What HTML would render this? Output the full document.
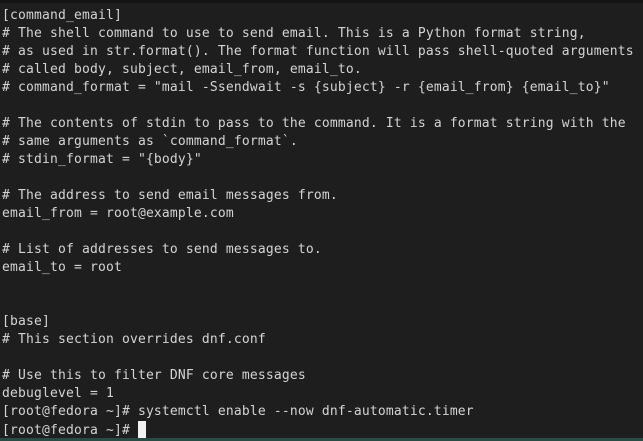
<html><head><style>
body{margin:0;width:643px;height:441px;background:#1e1e1e;overflow:hidden;position:relative}
.top{position:absolute;left:0;top:0;width:643px;height:3px;background:#141414}
.bot{position:absolute;left:0;top:438px;width:643px;height:3px;background:#2a4a44}
pre{position:absolute;left:2px;top:7px;margin:0;font-family:"DejaVu Sans Mono",monospace;font-size:13px;letter-spacing:0.17px;line-height:18px;color:#d4d4d4}
.cur{display:inline-block;width:8px;height:17px;background:#f2f2f2;vertical-align:-4px}
</style></head><body><div class="top"></div><div class="bot"></div><pre>[command_email]
# The shell command to use to send email. This is a Python format string,
# as used in str.format(). The format function will pass shell-quoted arguments
# called body, subject, email_from, email_to.
# command_format = "mail -Ssendwait -s {subject} -r {email_from} {email_to}"

# The contents of stdin to pass to the command. It is a format string with the
# same arguments as `command_format`.
# stdin_format = "{body}"

# The address to send email messages from.
email_from = root@example.com

# List of addresses to send messages to.
email_to = root


[base]
# This section overrides dnf.conf

# Use this to filter DNF core messages
debuglevel = 1
[root@fedora ~]# systemctl enable --now dnf-automatic.timer
[root@fedora ~]# <span class="cur"></span></pre></body></html>
